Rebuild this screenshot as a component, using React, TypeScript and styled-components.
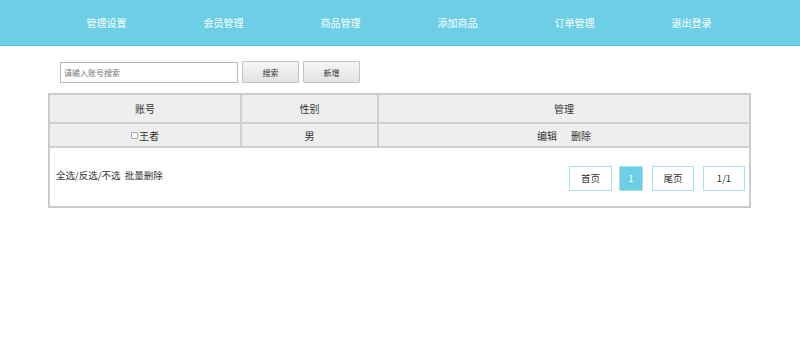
import React from "react";
import styled, { createGlobalStyle } from "styled-components";

const Global = createGlobalStyle`
  html, body { margin: 0; padding: 0; background: #fff; }
  body { font-family: "Microsoft YaHei", "Noto Sans CJK SC", "Noto Sans", sans-serif; font-size: 10px; color: #333; }
`;

const Header = styled.div`
  height: 45px;
  background: #6ccfe5;
  border-bottom: 1px solid #5fc3da;
  display: flex;
  justify-content: flex-start;
  padding-left: 48px;
`;

const NavItem = styled.a`
  width: 117px;
  height: 45px;
  display: flex;
  align-items: center;
  justify-content: center;
  color: #fff;
  font-size: 10px;
  text-decoration: none;
`;

const Main = styled.div`
  margin-left: 48px;
  width: 703px;
`;

const SearchBar = styled.div`
  display: flex;
  align-items: center;
  gap: 4px;
  padding: 15px 0 10px 12px;
`;

const SearchInput = styled.input`
  box-sizing: border-box;
  width: 178px;
  height: 21px;
  border: 1px solid #b8b8b8;
  padding: 0 3px;
  font-family: inherit;
  font-size: 8px;
  color: #333;
  outline: none;
  &::placeholder { color: #777; }
`;

const Button = styled.button`
  box-sizing: border-box;
  width: 57px;
  height: 22px;
  border: 1px solid #c4c4c4;
  border-radius: 1px;
  background: linear-gradient(#f6f6f6, #e2e2e2);
  font-family: inherit;
  font-size: 8px;
  color: #333;
  padding: 0;
`;

const Table = styled.table`
  border-collapse: separate;
  border-spacing: 0;
  border: 1px solid #c8c8c8;
  width: 703px;
  table-layout: fixed;
`;

const Cell = styled.td<{ $head?: boolean }>`
  border: 1px solid #cfcfcf;
  background: #eeeeee;
  text-align: center;
  font-size: 10px;
  color: #333;
  padding: 0;
  height: ${(p) => (p.$head ? "27px" : "22px")};
`;

const Check = styled.span`
  display: inline-block;
  width: 5px;
  height: 5px;
  border: 1px solid #aaa;
  border-radius: 1px;
  margin-right: 1px;
  vertical-align: 1px;
  background: #fff;
`;

const Action = styled.span`
  margin: 0 7px;
`;

const FooterCell = styled.td`
  border: 1px solid #cfcfcf;
  height: 58px;
  padding: 0 4px 0 6px;
`;

const FooterRow = styled.div`
  display: flex;
  align-items: center;
  justify-content: space-between;
`;

const FooterText = styled.span`
  font-size: 9.5px;
  color: #333;
  margin-bottom: 5px;
`;

const Pager = styled.div`
  display: flex;
  padding-top: 2px;
`;

const PageBtn = styled.span<{ $active?: boolean; $w: number; $gap: number }>`
  box-sizing: border-box;
  width: ${(p) => p.$w}px;
  margin-left: ${(p) => p.$gap}px;
  height: 25px;
  display: flex;
  align-items: center;
  justify-content: center;
  border: 1px solid #a9e1ee;
  background: ${(p) => (p.$active ? "#6ccfe5" : "#fff")};
  color: ${(p) => (p.$active ? "#fff" : "#333")};
  font-size: 9.5px;
`;

const navs = ["管理设置", "会员管理", "商品管理", "添加商品", "订单管理", "退出登录"];

export default function App() {
  return (
    <>
      <Global />
      <Header>
        {navs.map((n) => (
          <NavItem key={n}>{n}</NavItem>
        ))}
      </Header>
      <Main>
        <SearchBar>
          <SearchInput placeholder="请输入账号搜索" />
          <Button>搜索</Button>
          <Button>新增</Button>
        </SearchBar>
        <Table>
          <colgroup>
            <col style={{ width: 192 }} />
            <col style={{ width: 137 }} />
            <col />
          </colgroup>
          <tbody>
            <tr>
              <Cell $head>账号</Cell>
              <Cell $head>性别</Cell>
              <Cell $head>管理</Cell>
            </tr>
            <tr>
              <Cell>
                <Check />王者
              </Cell>
              <Cell>男</Cell>
              <Cell>
                <Action>编辑</Action>
                <Action>删除</Action>
              </Cell>
            </tr>
            <tr>
              <FooterCell colSpan={3}>
                <FooterRow>
                  <FooterText>全选/反选/不选&nbsp;&nbsp;批量删除</FooterText>
                  <Pager>
                    <PageBtn $w={43} $gap={0}>首页</PageBtn>
                    <PageBtn $w={24} $gap={7} $active>1</PageBtn>
                    <PageBtn $w={42} $gap={9}>尾页</PageBtn>
                    <PageBtn $w={42} $gap={9}>1/1</PageBtn>
                  </Pager>
                </FooterRow>
              </FooterCell>
            </tr>
          </tbody>
        </Table>
      </Main>
    </>
  );
}
